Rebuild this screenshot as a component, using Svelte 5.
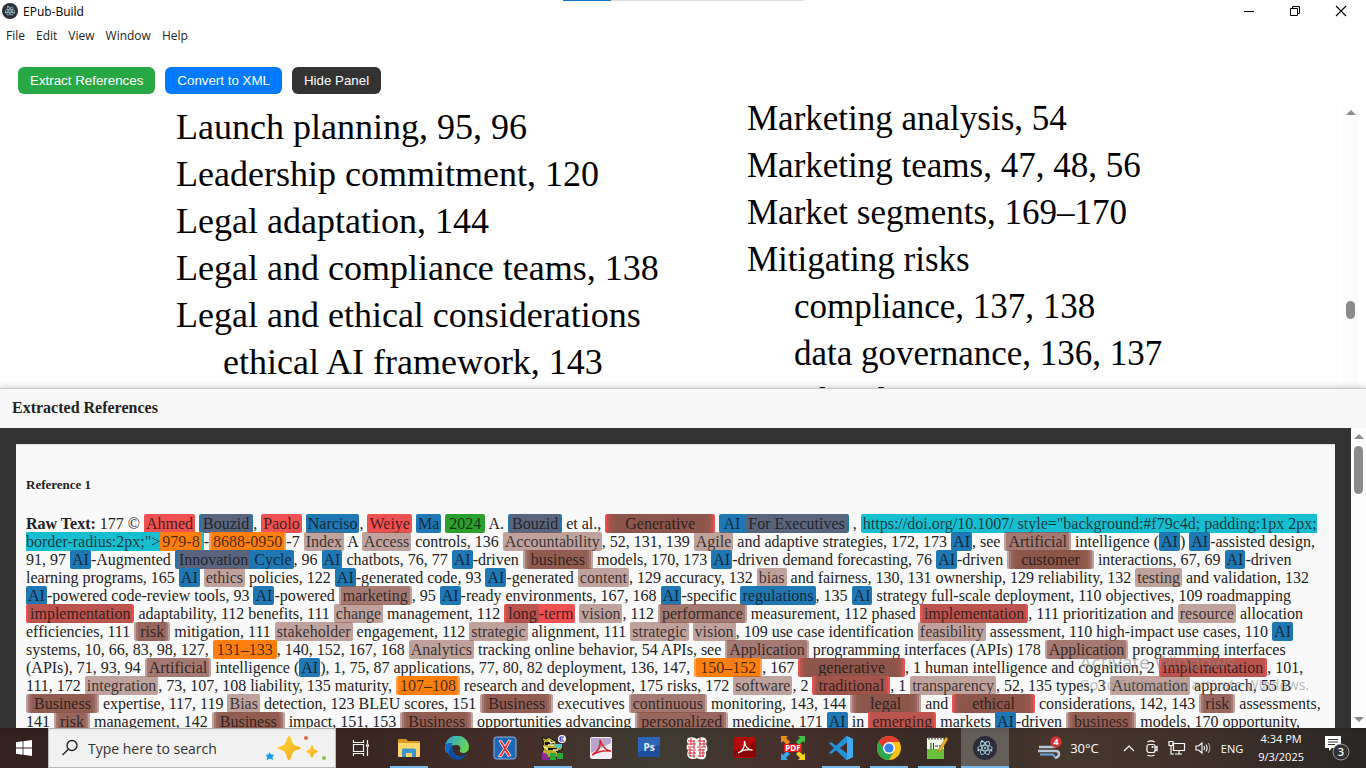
<script>
  const menus = ['File', 'Edit', 'View', 'Window', 'Help'];

  const left = [
    ['Launch planning, 95, 96', 0],
    ['Leadership commitment, 120', 0],
    ['Legal adaptation, 144', 0],
    ['Legal and compliance teams, 138', 0],
    ['Legal and ethical considerations', 0],
    ['ethical AI framework, 143', 1],
  ];
  const right = [
    ['Marketing analysis, 54', 0],
    ['Marketing teams, 47, 48, 56', 0],
    ['Market segments, 169–170', 0],
    ['Mitigating risks', 0],
    ['compliance, 137, 138', 1],
    ['data governance, 136, 137', 1],
    ['ethical usage, 137', 1],
  ];

  // [layers:text] wraps the text in one highlight for each letter, outermost first.
  const raw =
    '177 © [r:Ahmed] [bn:Bouzid], [r:Paolo] [b:Narciso], [r:Weiye] [b:Ma] [gg:2024] A. [bn:Bouzid] et al., ' +
    '[rnnnnnnnnn:Generative] [b:[b:AI] [n:For Executives]] , [c:https://doi.org/10.1007/ style="background:#f79c4d; padding:1px 2px; ' +
    'border-radius:2px;">[o:979-8]]-[po:8688-0950]-7 [n:Index] A [n:Access] controls, 136 [n:Accountability], 52, 131, 139 ' +
    '[n:Agile] and adaptive strategies, 172, 173 [b:AI], see [nn:Artificial] intelligence ([b:AI]) [b:AI]-assisted design, ' +
    '91, 97 [b:AI]-Augmented [b:[n:Innovation] Cycle], 96 [b:AI] chatbots, 76, 77 [b:AI]-driven [nnnn:business] models, 170, 173 ' +
    '[b:AI]-driven demand forecasting, 76 [b:AI]-driven [nnnnnnn:customer] interactions, 67, 69 [b:AI]-driven ' +
    'learning programs, 165 [b:AI] [n:ethics] policies, 122 [b:AI]-generated code, 93 [b:AI]-generated [n:content], 129 accuracy, ' +
    '132 [n:bias] and fairness, 130, 131 ownership, 129 reliability, 132 [n:testing] and validation, 132 ' +
    '[b:AI]-powered code-review tools, 93 [b:AI]-powered [nn:marketing], 95 [b:AI]-ready environments, 167, 168 [b:AI]-specific ' +
    '[b:regulations], 135 [b:AI] strategy full-scale deployment, 110 objectives, 109 roadmapping ' +
    '[rn:implementation] adaptability, 112 benefits, 111 [n:change] management, 112 [r:[n:long]-term] [n:vision], 112 ' +
    '[nn:performance] measurement, 112 phased [rn:implementation], 111 prioritization and [n:resource] allocation ' +
    'efficiencies, 111 [nnn:risk] mitigation, 111 [n:stakeholder] engagement, 112 [n:strategic] alignment, 111 [n:strategic] ' +
    '[n:vision], 109 use case identification [n:feasibility] assessment, 110 high-impact use cases, 110 [b:AI] ' +
    'systems, 10, 66, 83, 98, 127, [oo:131–133], 140, 152, 167, 168 [n:Analytics] tracking online behavior, 54 APIs, see ' +
    '[nn:Application] programming interfaces (APIs) 178 [nn:Application] programming interfaces ' +
    '(APIs), 71, 93, 94 [nn:Artificial] intelligence ([b:AI]), 1, 75, 87 applications, 77, 80, 82 deployment, 136, 147, ' +
    '[poo:150–152], 167 [rnnnnnnnnn:generative], 1 human intelligence and cognition, 2 [rn:implementation], 101, ' +
    '111, 172 [n:integration], 73, 107, 108 liability, 135 maturity, [po:107–108] research and development, 175 risks, 172 ' +
    '[n:software], 2 [rnn:traditional], 1 [n:transparency], 52, 135 types, 3 [n:Automation] approach, 55 B ' +
    '[nnnn:Business] expertise, 117, 119 [n:Bias] detection, 123 BLEU scores, 151 [nnnn:Business] executives [nn:continuous] ' +
    'monitoring, 143, 144 [nnnnnnnnnn:legal] and [rnnnnnnnnn:ethical] considerations, 142, 143 [nnn:risk] assessments, ' +
    '141 [nnn:risk] management, 142 [nnnn:Business] impact, 151, 153 [nnnn:Business] opportunities advancing ' +
    '[nnn:personalized] medicine, 171 [b:AI] in [rn:emerging] markets [b:AI]-driven [nnnn:business] models, 170 opportunity,';

  function parse(source) {
    let i = 0;
    function read() {
      const nodes = [];
      let text = '';
      const flush = () => {
        if (text) nodes.push({ text });
        text = '';
      };
      while (i < source.length && source[i] !== ']') {
        if (source[i] === '[') {
          flush();
          const colon = source.indexOf(':', i);
          const layers = source.slice(i + 1, colon);
          i = colon + 1;
          let kids = read();
          i++;
          for (const kind of [...layers].reverse()) kids = [{ kind, kids }];
          nodes.push(kids[0]);
        } else {
          text += source[i++];
        }
      }
      flush();
      return nodes;
    }
    return read();
  }

  const tree = parse(raw);
</script>

{#snippet run(nodes)}{#each nodes as n}{#if n.kind}<span class="hl {n.kind}">{@render run(n.kids)}</span>{:else}{n.text}{/if}{/each}{/snippet}

{#snippet electron()}
  <svg viewBox="0 0 24 24" aria-hidden="true">
    <circle cx="12" cy="12" r="12" fill="#2b2e3a" />
    <g fill="none" stroke="#a5d2df" stroke-width=".9">
      <ellipse cx="12" cy="12" rx="7.2" ry="2.700" transform="rotate(0 12 12)" />
      <ellipse cx="12" cy="12" rx="7.2" ry="2.700" transform="rotate(60 12 12)" />
      <ellipse cx="12" cy="12" rx="7.2" ry="2.700" transform="rotate(120 12 12)" />
    </g>
    <g fill="#c6e6ee"><circle cx="12" cy="12" r="1" /><circle cx="5.4" cy="14.2" r="1" /><circle cx="18.4" cy="14.6" r="1" /><circle cx="9" cy="5.2" r="1" /></g>
  </svg>
{/snippet}

<div class="screen">
  <header class="titlebar">
    <span class="appicon">{@render electron()}</span>
    <span class="title">EPub-Build</span>
    <span class="progress"><i></i></span>
    <div class="winbtns">
      <button aria-label="Minimize"><svg viewBox="0 0 12 12"><path d="M1 6.5h10" stroke="#000" /></svg></button>
      <button aria-label="Restore"><svg viewBox="0 0 12 12" fill="none" stroke="#000"><path d="M1.5 3.500h7v7h-7zM3.500 3.500v-2h7v7h-2" /></svg></button>
      <button aria-label="Close"><svg viewBox="0 0 12 12"><path d="M1 1l10 10M11 1L1 11" stroke="#000" stroke-width="1.100" /></svg></button>
    </div>
  </header>
  <nav class="menubar">
    {#each menus as m}<button>{m}</button>{/each}
  </nav>
  <div class="toolbar">
    <button class="green">Extract References</button>
    <button class="blue">Convert to XML</button>
    <button class="dark">Hide Panel</button>
  </div>

  <main class="viewer">
    <div class="cols">
      <div class="col first">
        {#each left as [t, sub]}<p class:sub={sub}>{t}</p>{/each}
      </div>
      <div class="col">
        {#each right as [t, sub]}<p class:sub={sub}>{t}</p>{/each}
      </div>
    </div>
    <div class="scroll vscroll">
      <i class="up"></i>
      <i class="thumb"></i>
    </div>
  </main>

  <section class="panel">
    <h2>Extracted References</h2>
    <div class="body">
      <div class="well">
        <article>
          <h3>Reference 1</h3>
          <p><b>Raw Text:</b> {@render run(tree)}</p>
        </article>
      </div>
      <div class="scroll pscroll">
        <i class="up"></i>
        <i class="thumb"></i>
        <i class="down"></i>
      </div>
    </div>
    <div class="watermark"><strong>Activate Windows</strong><span>Go to Settings to activate Windows.</span></div>
  </section>

  <footer class="taskbar">
    <button class="cell" aria-label="Start">
      <svg width="16" height="16" viewBox="0 0 16 16" fill="#fff"><path d="M0 2.300L6.600 1.300v6.300H0zM7.400 1.200L16 0v7.600H7.400zM0 8.400h6.600v6.300L0 13.700zM7.400 8.400H16V16l-8.600-1.200z" /></svg>
    </button>
    <label class="search">
      <svg width="18" height="18" viewBox="0 0 18 18" fill="none" stroke="#222" stroke-width="1.400"><circle cx="11" cy="6.500" r="5" /><path d="M7.400 10.200L1.500 16" /></svg>
      <input type="text" placeholder="Type here to search" aria-label="Search" />
      <svg width="62" height="26" viewBox="0 0 62 26">
        <defs><linearGradient id="gold" x1="0" y1="0" x2="1" y2="1"><stop offset="0" stop-color="#ffda3a" /><stop offset="1" stop-color="#f3a51c" /></linearGradient></defs>
        <path d="M24 1q1.500 0 3 5.500Q28 10 31.500 11q4.500 1.300 4.500 2.200T31.500 15Q28 16 27 19.500 25.500 25 24 25t-3-5.500Q20 16 16.500 15 12 14 12 13.200t4.500-2.200Q20 10 21 6.500 22.500 1 24 1z" fill="url(#gold)" />
        <path d="M47 10q1 0 1.700 3 .4 1.600 2 2 2.300.7 2.300 1.500t-2.300 1.500q-1.600.4-2 2Q48 23 47 23t-1.700-3q-.4-1.600-2-2-2.300-.7-2.300-1.500t2.300-1.500q1.600-.4 2-2Q46 10 47 10z" fill="url(#gold)" />
        <path d="M4.500 17l1.500 2.500 3.500.5-2 2 .5 3-2.800-1.300L1.500 25l.8-2.800L.500 19.800l3-.3z" fill="#1d9be8" />
        <circle cx="41" cy="3" r="2" fill="#e2683a" /><circle cx="59" cy="23" r="2" fill="#8bc34a" />
      </svg>
    </label>
    <button class="cell" aria-label="Task View">
      <svg width="18" height="18" viewBox="0 0 18 18" fill="none" stroke="#f3f3f3" stroke-width="1.200"><path d="M1.500 5.500h10v7h-10zM1.500 1v2.500h10V1M1.500 17v-2.500h10V17M15.500 1v4M15.500 8v9" /><path d="M14 6.500h3" stroke-width="2.400" /></svg>
    </button>
    <button class="cell run" aria-label="File Explorer">
      <svg width="24" height="24" viewBox="0 0 24 24"><path d="M1 4q0-1 1-1h7l2 2h11q1 0 1 1v14H1z" fill="#d99a1c" /><path d="M1 7h22v13q0 1-1 1H2q-1 0-1-1z" fill="#ffd667" /><path d="M5 21v-7q0-1.500 1.500-1.500h11q1.500 0 1.500 1.500v7h-4v-4H9v4z" fill="#3d94cf" /></svg>
    </button>
    <button class="cell" aria-label="Edge">
      <svg width="24" height="24" viewBox="0 0 24 24"><defs><linearGradient id="edge" x1="0" y1="0" x2="1" y2=".4"><stop offset="0" stop-color="#259fe0" /><stop offset="1" stop-color="#66d35b" /></linearGradient></defs><path d="M0 12a12 12 0 1 1 24-1c0 4-3 6-6 6-2 0-4-1-3-3 1-1.500.500-5-4-5-5 0-9 3-9 8Q0 15 0 12z" fill="url(#edge)" /><path d="M.300 9C2 7 5 6.500 8 7.500 5 9 7 18 13 20q4 1.500 8-1.500A12 12 0 0 1 .300 9z" fill="#1767c0" /><path d="M8 11q-1 8 6 9 4 .5 7.500-2Q18 24 12 24 4 23 4 16q0-4 4-5z" fill="#0d4a9a" /></svg>
    </button>
    <button class="cell" aria-label="XML Editor">
      <svg width="24" height="24" viewBox="0 0 24 24"><rect x="1" y="1" width="22" height="22" rx="2.500" fill="#1f66b5" stroke="#8ab6e6" /><path d="M6 5q2-1 3 0l3 5 3.500-6 2.500.5-4.500 8 4.500 7-3 1-3-5.500L8.500 21l-3-.5 5-8z" fill="#e33" stroke="#fff" stroke-width=".8" /></svg>
    </button>
    <button class="cell run" aria-label="Editor">
      <svg width="26" height="26" viewBox="0 0 26 26"><path d="M2 2l4 2 3-2 4 3 3 1v5l6 1v3l-6 1 3 3-3 4H5l-3-6 2-3-2-3 2-2z" fill="#b9ae2d" stroke="#111" /><path d="M5 7h9v3H5zM8 13h9v2H8z" fill="#111" /><path d="M9 5l2 3 3-1M8 10h6M4 12l4 2M13 15h5" stroke="#f5efa0" stroke-width="1.500" /><path d="M2 17l5 2 3 6H2z" fill="#8a2b91" /><path d="M10 18h6v7h-6zM17 18h6v6h-6z" fill="#27a83b" /><path d="M14 9h8v4h-6z" fill="#54c6c9" /><circle cx="22" cy="4" r="4" fill="#fff" /><path d="M20 2h4M20 4h3M20 6h4M20 2v4" stroke="#22b" fill="none" /></svg>
    </button>
    <button class="cell" aria-label="Distiller">
      <svg width="22" height="22" viewBox="0 0 22 22"><rect width="22" height="22" rx="2" fill="#f4eef4" /><path d="M1 1h20v5L1 16z" fill="#9a7ab5" opacity=".65" /><path d="M2 18C9 14 11 9 10 3c3 8 6 11 11 11-7-1-12 0-19 4z" fill="none" stroke="#d8232a" stroke-width="1.500" /></svg>
    </button>
    <button class="cell" aria-label="Photoshop">
      <svg width="22" height="22" viewBox="0 0 22 22"><rect width="22" height="20" fill="#1e4f9c" /><path d="M0 0h22v8L0 15z" fill="#2d65b8" /><text x="11" y="14" text-anchor="middle" font-size="10" font-weight="700" font-family="Open Sans, sans-serif" fill="#e6f1ff">Ps</text></svg>
    </button>
    <button class="cell" aria-label="Utility">
      <svg width="24" height="24" viewBox="0 0 24 24"><path d="M3 2q5-2 9 1 4-3 8-1 3 3 1 6 3 5 0 8 1 5-2 7-4 1-7-1-4 2-8 0-3-3-1-7-3-4 0-7-2-3 0-6z" fill="#fff" /><g stroke="#d32a36" fill="none"><path d="M3 5h7M13 5h7M2 8h9M14 8h7M3 11h6M12 11h9M2 14h9M13 14h7M3 17h8M14 17h6M4 20h6M13 20h6" /><path d="M6 2v7M9 5v8M15 2v8M19 4v7M5 12v8M9 15v7M15 12v9M18 13v8" stroke-width="1" /></g></svg>
    </button>
    <button class="cell" aria-label="Acrobat">
      <svg width="22" height="22" viewBox="0 0 22 22"><rect width="22" height="21" rx="1.500" fill="#b30b0b" /><path d="M0 14L22 5v15H0z" fill="#8c0505" /><path d="M4 16c5-2 7-6 6.500-12 .5 6 4 9 8 9-5-1-10 0-14.500 3z" fill="none" stroke="#fff" stroke-width="1.300" /></svg>
    </button>
    <button class="cell" aria-label="PDF Tools">
      <svg width="24" height="24" viewBox="0 0 24 24"><path d="M0 0h7L5 2l4 4-3 3-4-4-2 2z" fill="#f08a1d" /><path d="M24 0h-7l2 2-4 4 3 3 4-4 2 2z" fill="#43c04b" /><path d="M0 24h7l-2-2 4-4-3-3-4 4-2-2z" fill="#38a9e8" /><path d="M24 24h-7l2-2-4-4 3-3 4 4 2-2z" fill="#f3d31c" /><rect x="3" y="8" width="18" height="8" fill="#e01919" /><text x="12" y="15" text-anchor="middle" font-size="8" font-weight="700" font-family="Open Sans, sans-serif" fill="#fff">PDF</text></svg>
    </button>
    <button class="cell run" aria-label="Code">
      <svg width="24" height="24" viewBox="0 0 24 24"><path d="M17.500 0L24 3v18l-6.500 3L7 14.200 2.400 18 0 16.700 5 12 0 7.300 2.400 6 7 9.800zM18 6.500L11 12l7 5.500z" fill="#2490da" fill-rule="evenodd" /><path d="M18 0l6 3v18l-6 3z" fill="#44a9ee" /></svg>
    </button>
    <button class="cell run" aria-label="Chrome">
      <svg width="24" height="24" viewBox="0 0 24 24"><circle cx="12" cy="12" r="12" fill="#fbc116" /><path d="M12 6h10.400A12 12 0 0 0 1.600 6l5.200 9z" fill="#e33b2e" /><path d="M1.600 6A12 12 0 0 0 12 24l5.200-9-5.200 3z M1.600 6l5.200 9 5.200 3z" fill="#2da94f" /><circle cx="12" cy="12" r="6" fill="#fff" /><circle cx="12" cy="12" r="4.600" fill="#3b7ded" /></svg>
    </button>
    <button class="cell run" aria-label="Notepad++">
      <svg width="22" height="24" viewBox="0 0 22 24"><rect x="1" y="2" width="17" height="21" fill="#f4f8e8" /><path d="M1 13h17v10H1z" fill="#6abf3a" /><path d="M2 2.500h16" stroke="#777" stroke-dasharray="2 1" stroke-width="2" /><path d="M5 7v6M7.500 7v6M9 10h3M13 10h3" stroke="#333" /><path d="M20 1l2 2-7 12-3 2 1-4z" fill="#e9b52f" stroke="#a3701a" stroke-width=".6" /></svg>
    </button>
    <button class="cell run active" aria-label="EPub-Build"><span class="big">{@render electron()}</span></button>

    <div class="tray">
      <button class="weather" aria-label="Weather">
        <svg width="26" height="24" viewBox="0 0 26 24"><path d="M2 11h13q5 0 5-4M1 15h18q3 0 3 3t-4 4" fill="none" stroke="#b9c6d8" stroke-width="2.500" /><path d="M3 18.500h12q3 0 2 3" fill="none" stroke="#6da3dd" stroke-width="2" /><circle cx="19" cy="6" r="5.700" fill="#d83031" /><text x="19" y="9" text-anchor="middle" font-size="9" font-weight="700" font-family="Open Sans, sans-serif" fill="#fff">4</text></svg>
        <span>30°C</span>
      </button>
      <div class="icons">
        <svg width="14" height="16" viewBox="0 0 14 16" fill="none" stroke="#fff" stroke-width="1.200"><path d="M2 11l5-5 5 5" /></svg>
        <svg width="14" height="18" viewBox="0 0 14 18" fill="none" stroke="#fff" stroke-width="1.200"><rect x="2" y="5.500" width="8" height="8" rx="2" /><path d="M10 8.500l2-1v4l-2-1M2.500 3Q6 .8 9.500 3M2.500 16q3.500 2 7 0" /><circle cx="7.500" cy="8" r=".5" /></svg>
        <svg width="18" height="16" viewBox="0 0 18 16" fill="none" stroke="#fff" stroke-width="1.200"><path d="M5.500 3.500h11v7h-11zM11 10.500v3M7 14h7M1 1.500h4v4H1zM3 5.500V14h3" /></svg>
        <svg width="18" height="16" viewBox="0 0 18 16" fill="none" stroke="#fff" stroke-width="1.100"><path d="M1 6h2.500L7 3v10L3.500 10H1zM9 6q1.200 2 0 4M11 4.500q2.200 3.500 0 7" /><path d="M13.300 3q3 5 0 10" opacity=".6" /></svg>
      </div>
      <span class="lang">ENG</span>
      <div class="clock"><span>4:34 PM</span><span>9/3/2025</span></div>
      <button class="notes" aria-label="Notifications">
        <svg width="26" height="26" viewBox="0 0 26 26"><path d="M1 1h16v12H8l-3 3v-3H1z" fill="#fff" /><path d="M4 4.500h10M4 7h10M4 9.500h7" stroke="#333" /><circle cx="17" cy="17" r="8" fill="#333" stroke="#999" /><text x="17" y="21" text-anchor="middle" font-size="11" font-weight="600" font-family="Open Sans, sans-serif" fill="#fff">3</text></svg>
      </button>
    </div>
  </footer>
</div>

<style>
  :global(body) { margin: 0; background: #fff; }
  button { border: 0; background: none; padding: 0; color: inherit; }
  svg { display: block; }
  i { display: block; }
  .screen {
    height: 100vh;
    display: flex;
    flex-direction: column;
    overflow: hidden;
    font-family: "Open Sans", "Noto Sans", sans-serif;
    color: #222;
  }
  .titlebar { position: relative; display: flex; align-items: center; height: 22px; padding-left: 2px; flex: none; }
  .appicon { width: 16px; }
  .title { margin-left: 5px; font-size: 12px; color: #000; }
  .progress { position: absolute; top: 0; left: 563px; width: 241px; height: 1px; background: #ddd; }
  .progress i { width: 48px; height: 1px; background: #1a74c8; }
  .winbtns { margin-left: auto; display: flex; padding-right: 2px; }
  .winbtns button { width: 46px; display: flex; justify-content: center; }
  .winbtns svg { width: 12px; height: 12px; }
  .menubar { display: flex; gap: 11px; padding: 4px 6px; font-size: 12px; line-height: 20px; flex: none; }
  .menubar button { font: inherit; }
  .toolbar { display: flex; gap: 10px; padding: 17px 18px 10px; flex: none; }
  .toolbar button {
    height: 27px;
    padding: 0 12px;
    border-radius: 6px;
    font-family: "Liberation Sans", Arial, sans-serif;
    font-weight: 500;
    color: #fff;
  }
  .toolbar .green { background: #28a745; }
  .toolbar .blue { background: #007bff; }
  .toolbar .dark { background: #333; }

  .viewer { flex: 1; min-height: 0; display: flex; overflow: hidden; }
  .cols { flex: 1; display: grid; grid-template-columns: 571px 1fr; padding-left: 176px; }
  .col { margin-top: -9px; font: 35px/47px "Liberation Serif", serif; color: #000; white-space: nowrap; }
  .col.first { padding-top: 9px; font-size: 36px; }
  .col p { margin: 0; }
  .col .sub { padding-left: 47px; }
  .scroll { display: flex; flex-direction: column; align-items: center; background: #fcfcfc; flex: none; }
  .up { border: 5px solid transparent; border-top: 0; border-bottom: 5px solid #8b8b8b; }
  .down { border: 5px solid transparent; border-bottom: 0; border-top: 5px solid #8b8b8b; }
  .thumb { background: #8b8b8b; border-radius: 5px; width: 9px; }
  .vscroll { width: 15px; margin-right: 8px; padding-top: 6px; }
  .vscroll .thumb { height: 18px; margin-top: 186px; }

  .panel {
    position: relative;
    flex: 0 0 340px;
    display: flex;
    flex-direction: column;
    min-height: 0;
    background: #f7f7f7;
    box-shadow: 0 -1px 6px rgba(0, 0, 0, .2);
    font-family: "Liberation Serif", serif;
    box-sizing: border-box;
    border-top: 1px solid #ccc;
  }
  h2 { margin: 0; padding: 0 12px 1px; font-size: 16px; line-height: 38px; flex: none; }
  .body { flex: 1; min-height: 0; display: flex; }
  .well { flex: 1; background: #333; padding: 16px 16px 0; overflow: hidden; }
  article { background: #f9f9f9; padding: 32px 10px; border-top: 1px solid #ddd; }
  h3 { margin: 0; font-size: 13px; line-height: 16px; }
  article p { margin: 22px 0 0; font-size: 16px; line-height: 18px; }
  .hl { padding: 1px 2px; border-radius: 2px; color: rgba(15, 15, 15, .78); }
  .r { background: #ef5052; }
  .b { background: #1f77b4; }
  .g { background: #2ca02c; }
  .n { background: #8c564b88; }
  .c { background: #17becf; }
  .o { background: #ff7f0e; }
  .p { background: #ff7f0ebb; }
  .pscroll { width: 15px; padding: 6px 0; }
  .pscroll .thumb { height: 48px; margin-top: 7px; }
  .pscroll .down { margin-top: auto; }
  .watermark {
    position: absolute;
    right: 57px;
    bottom: 33px;
    display: flex;
    flex-direction: column;
    font-family: "Open Sans", sans-serif;
    color: rgba(140, 140, 140, .6);
    font-size: 14px;
    line-height: 20px;
    white-space: nowrap;
  }
  .watermark strong { font-size: 19px; font-weight: 400; line-height: 26px; }

  .taskbar {
    flex: none;
    height: 40px;
    display: flex;
    color: #fff;
    background: linear-gradient(90deg, #33211f, #3a2622 28%, #452f2a 38%, #3f3c31 48%, #46302b 58%, #382a26 68%, #45372c 78%, #40302a 88%, #292726);
  }
  .cell { width: 48px; display: flex; align-items: center; justify-content: center; box-sizing: border-box; flex: none; }
  .run { background: linear-gradient(#76b9ed, #76b9ed) center bottom / 38px 2px no-repeat; }
  .active { background: linear-gradient(#76b9ed, #76b9ed) center bottom / 48px 2px no-repeat, #635e58; }
  .big { width: 24px; }
  .search {
    flex: 0 0 288px;
    margin-right: 1px;
    display: flex;
    align-items: center;
    gap: 9px;
    padding: 0 8px 0 12px;
    background: #f2f2f2;
    border: 1px solid #bbb;
    box-sizing: border-box;
    min-width: 0;
  }
  .search svg { flex: none; }
  .search input { flex: 1; min-width: 0; border: 0; padding: 0; background: none; outline: 0; font: 14px "Open Sans", sans-serif; }
  .search input::placeholder { color: #333; opacity: 1; }
  .tray { margin-left: auto; display: flex; align-items: center; font-size: 12px; padding-right: 16px; }
  .weather { display: flex; align-items: center; gap: 7px; margin-right: 23px; font: 13px "Open Sans", sans-serif; }
  .icons { display: flex; align-items: center; gap: 9px; }
  .lang { margin-left: 8px; font-size: 11px; }
  .clock { margin-left: 15px; display: flex; flex-direction: column; text-align: center; font-size: 11px; line-height: 18px; }
  .notes { margin-left: 20px; }
</style>
